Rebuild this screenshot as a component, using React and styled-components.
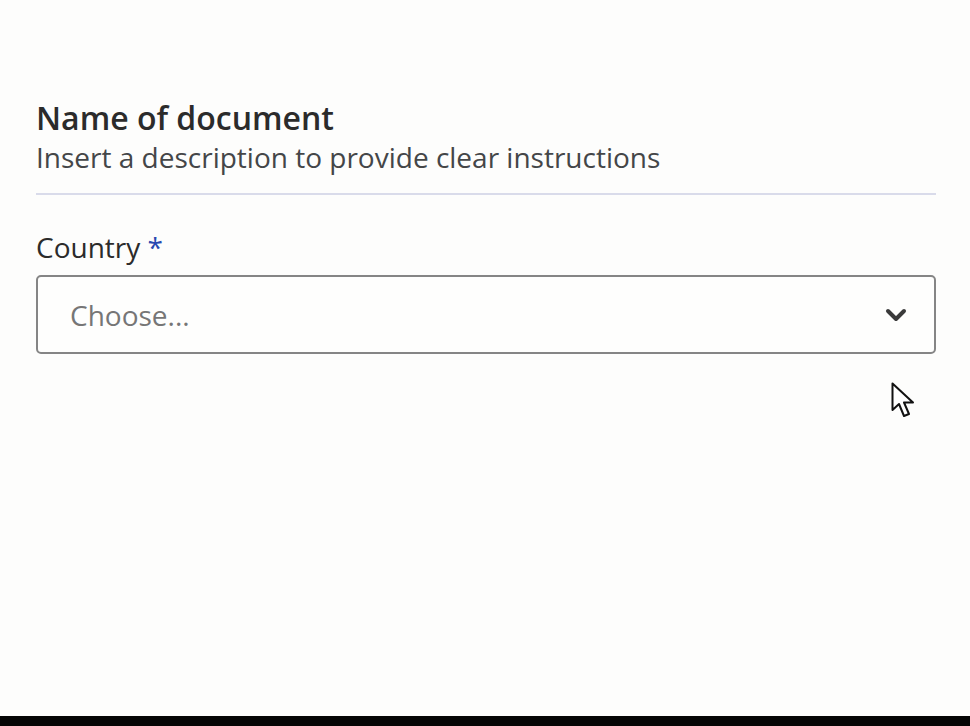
import React from 'react';
import styled, { createGlobalStyle } from 'styled-components';

const Global = createGlobalStyle`
  html, body {
    margin: 0;
    padding: 0;
    background: #fdfdfc;
  }
  body {
    font-family: "Open Sans", "Noto Sans", sans-serif;
  }
  * {
    box-sizing: border-box;
  }
`;

const Page = styled.div`
  position: relative;
  width: 970px;
  height: 726px;
  display: flex;
  flex-direction: column;
  background: #fdfdfc;
  overflow: hidden;
`;

const Content = styled.div`
  flex: 1;
  padding: 98px 34px 0 36px;
`;

const Header = styled.div`
  padding-bottom: 17px;
  border-bottom: 2px solid #d9dbea;
`;

const Title = styled.h1`
  margin: 0;
  font-size: 32px;
  font-weight: 600;
  line-height: 40px;
  color: #2b2b2b;
`;

const Subtitle = styled.p`
  margin: 0;
  font-size: 28px;
  line-height: 38px;
  color: #444648;
`;

const Field = styled.div`
  margin-top: 33px;
`;

const Label = styled.label`
  display: block;
  font-size: 28px;
  line-height: 38px;
  color: #2b2b2b;
  margin-bottom: 9px;
`;

const Required = styled.span`
  color: #2848b0;
`;

const Select = styled.div`
  display: flex;
  align-items: center;
  justify-content: space-between;
  height: 79px;
  padding: 0 27px 0 32px;
  border: 2px solid #858585;
  border-radius: 5px;
  background: #fefefd;
`;

const Placeholder = styled.span`
  font-size: 28px;
  color: #767676;
`;

const Cursor = styled.svg`
  position: absolute;
  left: 891px;
  top: 382px;
`;

const Footer = styled.div`
  height: 10px;
  background: #050505;
`;

export default function App() {
  return (
    <Page>
      <Global />
      <Content>
        <Header>
          <Title>Name of document</Title>
          <Subtitle>Insert a description to provide clear instructions</Subtitle>
        </Header>
        <Field>
          <Label>
            Country <Required>*</Required>
          </Label>
          <Select>
            <Placeholder>Choose...</Placeholder>
            <svg width="22" height="14" viewBox="0 0 22 14">
              <path d="M3 3 L11 11 L19 3" fill="none" stroke="#3a3a3a" strokeWidth="4" strokeLinecap="round" strokeLinejoin="round" />
            </svg>
          </Select>
        </Field>
      </Content>
      <Cursor width="26" height="38" viewBox="0 0 26 38">
        <path d="M1.5 1.5 L1.5 28 L8 22 L13 34 L18 32 L13 20.5 L22 20.5 Z" fill="#ffffff" stroke="#111" strokeWidth="2" strokeLinejoin="round" />
      </Cursor>
      <Footer />
    </Page>
  );
}
